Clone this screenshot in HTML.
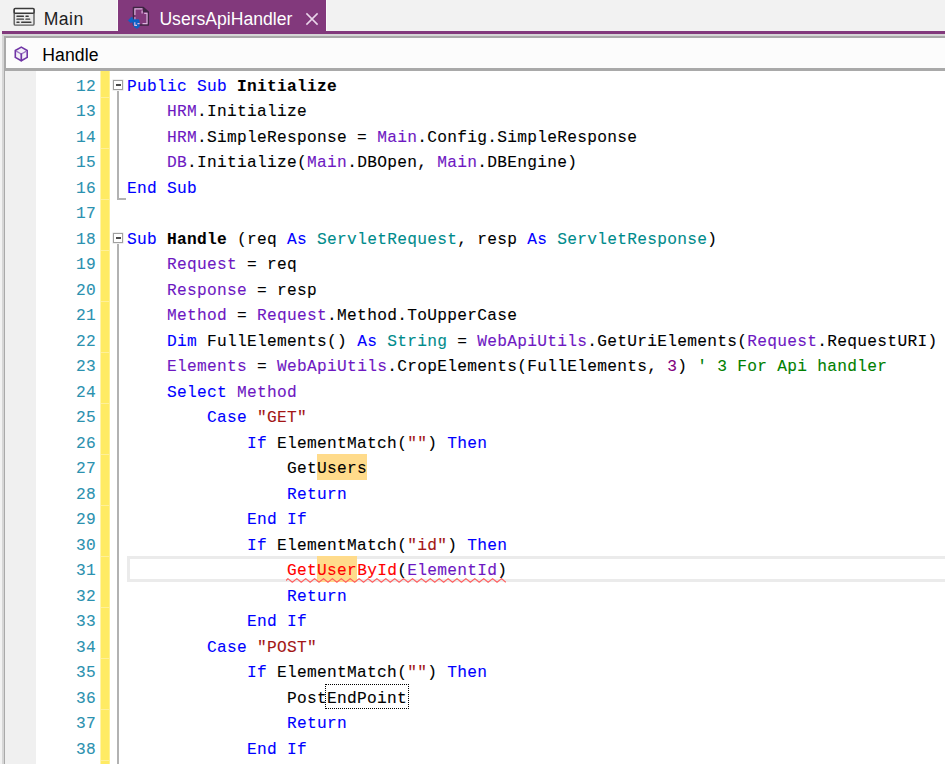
<!DOCTYPE html>
<html lang="en">
<head>
<meta charset="utf-8">
<title>UsersApiHandler</title>
<style>
html,body{margin:0;padding:0;}
body{width:945px;height:764px;overflow:hidden;background:#f2f2f2;position:relative;font-family:"Liberation Sans",sans-serif;}
#tabact{position:absolute;left:118px;top:0;width:208px;height:32px;background:#82397c;}
#tabwl{position:absolute;left:117px;top:0;width:1px;height:31px;background:#fafafa;}
#tabwr{position:absolute;left:326px;top:0;width:1px;height:31px;background:#fafafa;}
#tabline{position:absolute;left:2px;top:31px;width:943px;height:3px;background:#82397c;}
.tabtxt{position:absolute;font-size:17.6px;line-height:20px;color:#1e1e1e;white-space:pre;}
#frame1{position:absolute;left:2px;top:34px;width:943px;height:730px;background:#d6d6d6;}
#frame2{position:absolute;left:4px;top:36px;width:941px;height:728px;background:#a9a9a9;}
#subbar{position:absolute;left:6px;top:38px;width:939px;height:30px;background:#fcfcfc;}
#editor{position:absolute;left:5px;top:71px;width:940px;height:693px;background:#fff;overflow:hidden;}
#gutter{position:absolute;left:0;top:0;width:31px;height:693px;background:#f0f0f0;}
#ybar{position:absolute;left:96px;top:0;width:8px;height:693px;background:repeating-linear-gradient(to bottom,#ffeb64 0,#ffeb64 26px,#fff09a 26px,#fff09a 27px,#ffeb64 27px,#ffeb64 51px);box-shadow:-1px 0 0 rgba(255,235,100,.55),1px 0 0 rgba(255,235,100,.7);}
#lines{position:absolute;left:0;top:0.5px;width:940px;}
.ln{position:relative;height:25.5px;white-space:pre;font-family:"Liberation Mono","DejaVu Sans Mono",monospace;font-size:16.2px;line-height:25.5px;letter-spacing:0.29px;color:#000;-webkit-text-stroke:0.1px currentColor;}
.no{position:absolute;left:31px;top:3.2px;width:60px;text-align:right;color:#2b91af;}
.code{position:absolute;left:122px;top:3.2px;}
.cur:before{content:"";position:absolute;left:122px;top:0;right:0;height:19.5px;border:3px solid #ebebeb;border-right:0;}
.k{color:#0000ff}.v{color:#6e18c2}.y{color:#008b8b}.s{color:#a31515}.c{color:#008000}.n{color:#800080}
.b{font-weight:bold}
.e{color:#f00}
.hl{position:absolute;top:0;height:25.5px;background:#ffdb8b;}
.sq{position:absolute;top:21.6px;}
.dot{position:absolute;top:0;height:23.5px;border:1px dotted #000;box-sizing:content-box;margin-left:-1px;}
.E{position:relative}
.fbox{position:absolute;left:108px;width:8px;height:8px;border:1px solid #a0a0a0;background:#fff;box-shadow:0 0 0 0.5px rgba(160,160,160,.35);}
.fbox:after{content:"";position:absolute;left:1.5px;top:3px;width:5px;height:2px;background:#4a4a4a;}
.fline{position:absolute;left:112px;width:2px;background:#b2b2b2;}
.ftick{position:absolute;left:112px;width:9px;height:2px;background:#b2b2b2;}

</style>
</head>
<body>
<div id="tabact"></div>
<div id="tabwl"></div><div id="tabwr"></div>
<div id="tabline"></div>
<div id="frame1"></div>
<div id="frame2"></div>
<div class="tabtxt" style="left:43.7px;top:9px;letter-spacing:0.45px">Main</div>
<div class="tabtxt" style="left:159.4px;top:9px;color:#fff">UsersApiHandler</div>
<div id="subbar"></div>
<div class="tabtxt" style="left:42.3px;top:45px;color:#000;letter-spacing:0.08px">Handle</div>
<svg style="position:absolute;left:0;top:0" width="945" height="70" viewBox="0 0 945 70">
<g>
<rect x="14.2" y="8.6" width="19.8" height="16.5" rx="1.2" fill="#e9e9e9" stroke="#5e5e5e" stroke-width="1.4"/>
<rect x="14.2" y="8.6" width="19.8" height="4.6" rx="1" fill="#fdfdfd" stroke="#3a3a3a" stroke-width="1.5"/>
<g stroke="#3c3c3c" stroke-width="1.4" stroke-linecap="round" fill="none">
<path d="M17 16.2H23.4M26 16.2H28.2M17 19.15H23.4M26 19.15H29.6M17 22.2H19M21.7 22.2H30.9"/>
</g>
</g>
<g>
<path d="M133.5 7.6H143.3L148.3 12V25.1H133.5Z" fill="#82397c" stroke="#3e2542" stroke-width="1.5" stroke-linejoin="round"/>
<path d="M143 7.6L148.3 12.2H143Z" fill="#3e2542"/>
<path d="M134.9 15V8.9H142.4M142.1 10.6V13.4M144.2 13.3H147V23.6H142.5M139 23.6H136" stroke="#d9b3dc" stroke-width="1.2" fill="none"/>
<path d="M134.9 17V23.6" stroke="#c9a0cc" stroke-width="1.2" fill="none"/>
<g fill="#0c62c6" stroke="#0c62c6" stroke-width="0.7" stroke-linejoin="round">
<path d="M128.3 20.4L131.6 17.1L133 18.4L132 19.7H138.9V21.3H132.2L132.8 22L130.3 22.5Z"/>
<path d="M133 21.3H139.1L139.3 26.8L137 28.5L134.6 27.2L133.1 24.2Z"/>
</g>
<path d="M134.8 22.3V25.3H137M137.5 23.7H139.6" stroke="#dcb8df" stroke-width="1.2" fill="none"/>
</g>
<path d="M306.4 13.4L317.6 24.6M317.6 13.4L306.4 24.6" stroke="#ead6ea" stroke-width="1.5" fill="none"/>
<g stroke="#7035a6" stroke-width="1.6" fill="#f3f0f8" stroke-linejoin="round" stroke-linecap="round">
<path d="M21.3 47.1L27.2 50.5V57.4L21.3 60.8L15.3 57.4V50.5Z"/>
<path d="M16.6 51.4L21.3 54L26 51.4" stroke="#9a74c2" stroke-width="1.2" fill="none"/>
<path d="M21.3 54.2V60.6" stroke-width="1.7" fill="none"/>
</g>
</svg>

<div id="editor">
<div id="gutter"></div>
<div id="ybar"></div>
<div class="fbox" style="top:8.5px"></div>
<div class="fline" style="top:20px;height:108px"></div>
<div class="ftick" style="top:126.5px"></div>
<div class="fbox" style="top:161.5px"></div>
<div class="fline" style="top:173px;height:520px"></div>
<div id="lines">
<div class="ln"><span class="no">12</span><span class="code"><span class="k">Public Sub </span><span class="b">Initialize</span></span></div>
<div class="ln"><span class="no">13</span><span class="code">    <span class="v">HRM</span>.Initialize</span></div>
<div class="ln"><span class="no">14</span><span class="code">    <span class="v">HRM</span>.SimpleResponse = <span class="v">Main</span>.Config.SimpleResponse</span></div>
<div class="ln"><span class="no">15</span><span class="code">    <span class="v">DB</span>.Initialize(<span class="v">Main</span>.DBOpen, <span class="v">Main</span>.DBEngine)</span></div>
<div class="ln"><span class="no">16</span><span class="code"><span class="k">End Sub</span></span></div>
<div class="ln"><span class="no">17</span><span class="code"></span></div>
<div class="ln"><span class="no">18</span><span class="code"><span class="k">Sub </span><span class="b">Handle</span> (req <span class="k">As </span><span class="y">ServletRequest</span>, resp <span class="k">As </span><span class="y">ServletResponse</span>)</span></div>
<div class="ln"><span class="no">19</span><span class="code">    <span class="v">Request</span> = req</span></div>
<div class="ln"><span class="no">20</span><span class="code">    <span class="v">Response</span> = resp</span></div>
<div class="ln"><span class="no">21</span><span class="code">    <span class="v">Method</span> = <span class="v">Request</span>.Method.ToUpperCase</span></div>
<div class="ln"><span class="no">22</span><span class="code">    <span class="k">Dim </span>FullElements() <span class="k">As </span><span class="y">String</span> = <span class="v">WebApiUtils</span>.GetUriElements(<span class="v">Request</span>.RequestURI)</span></div>
<div class="ln"><span class="no">23</span><span class="code">    <span class="v">Elements</span> = <span class="v">WebApiUtils</span>.CropElements(FullElements, <span class="n">3</span>) <span class="c">' 3 For Api handler</span></span></div>
<div class="ln"><span class="no">24</span><span class="code">    <span class="k">Select </span><span class="v">Method</span></span></div>
<div class="ln"><span class="no">25</span><span class="code">        <span class="k">Case </span><span class="s">"GET"</span></span></div>
<div class="ln"><span class="no">26</span><span class="code">            <span class="k">If </span>ElementMatch(<span class="s">""</span>) <span class="k">Then</span></span></div>
<div class="ln"><i class="hl" style="left:312.00px;width:49.60px"></i><span class="no">27</span><span class="code">                GetUsers</span></div>
<div class="ln"><span class="no">28</span><span class="code">                <span class="k">Return</span></span></div>
<div class="ln"><span class="no">29</span><span class="code">            <span class="k">End If</span></span></div>
<div class="ln"><span class="no">30</span><span class="code">            <span class="k">If </span>ElementMatch(<span class="s">"id"</span>) <span class="k">Then</span></span></div>
<div class="ln cur"><i class="hl" style="left:312.00px;width:39.60px"></i><svg class="sq" style="left:281.19px" width="222" height="6" viewBox="0 0 222 6"><path d="M0.00 2.60 L1.90 0.60 L6.35 4.20 L10.80 0.60 L15.25 4.20 L19.70 0.60 L24.15 4.20 L28.60 0.60 L33.05 4.20 L37.50 0.60 L41.95 4.20 L46.40 0.60 L50.85 4.20 L55.30 0.60 L59.75 4.20 L64.20 0.60 L68.65 4.20 L73.10 0.60 L77.55 4.20 L82.00 0.60 L86.45 4.20 L90.90 0.60 L95.35 4.20 L99.80 0.60 L104.25 4.20 L108.70 0.60 L113.15 4.20 L117.60 0.60 L122.05 4.20 L126.50 0.60 L130.95 4.20 L135.40 0.60 L139.85 4.20 L144.30 0.60 L148.75 4.20 L153.20 0.60 L157.65 4.20 L162.10 0.60 L166.55 4.20 L171.00 0.60 L175.45 4.20 L179.90 0.60 L184.35 4.20 L188.80 0.60 L193.25 4.20 L197.70 0.60 L202.15 4.20 L206.60 0.60 L211.05 4.20 L215.50 0.60 L219.76 4.20" fill="none" stroke="#ff5f5f" stroke-width="1.15" stroke-linejoin="round"/></svg><span class="no">31</span><span class="code">                <span class="E"><span class="e">Get</span><span class="e">User</span><span class="e">ById</span>(<span class="v">ElementId</span>)</span></span></div>
<div class="ln"><span class="no">32</span><span class="code">                <span class="k">Return</span></span></div>
<div class="ln"><span class="no">33</span><span class="code">            <span class="k">End If</span></span></div>
<div class="ln"><span class="no">34</span><span class="code">        <span class="k">Case </span><span class="s">"POST"</span></span></div>
<div class="ln"><span class="no">35</span><span class="code">            <span class="k">If </span>ElementMatch(<span class="s">""</span>) <span class="k">Then</span></span></div>
<div class="ln"><i class="dot" style="left:321.44px;width:81.70px"></i><span class="no">36</span><span class="code">                PostEndPoint</span></div>
<div class="ln"><span class="no">37</span><span class="code">                <span class="k">Return</span></span></div>
<div class="ln"><span class="no">38</span><span class="code">            <span class="k">End If</span></span></div>
<div class="ln"><span class="no">39</span><span class="code"></span></div>
</div>
</div>

</body>
</html>
